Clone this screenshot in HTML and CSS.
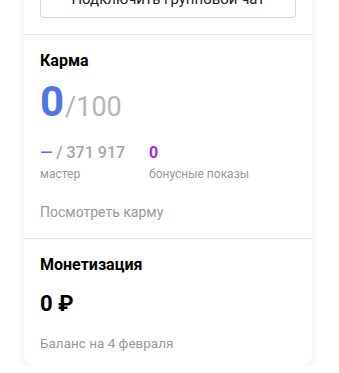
FILE: index.html
```html
<!DOCTYPE html>
<html lang="ru">
<head>
<meta charset="utf-8">
<link rel="stylesheet" href="styles.css">
</head>
<body>
<div class="card">
  <div class="section top">
    <button class="btn">Подключить групповой чат</button>
  </div>
  <div class="section karma">
    <h2 class="title">Карма</h2>
    <div class="score"><span class="score-val">0</span><span class="score-max">/100</span></div>
    <div class="stats">
      <div class="stat">
        <div class="stat-val"><span class="dash">—</span> / 371 917</div>
        <div class="stat-label">мастер</div>
      </div>
      <div class="stat">
        <div class="stat-val purple">0</div>
        <div class="stat-label">бонусные показы</div>
      </div>
    </div>
    <a class="link">Посмотреть карму</a>
  </div>
  <div class="section money">
    <h2 class="title">Монетизация</h2>
    <div class="amount">0 ₽</div>
    <div class="note">Баланс на 4 февраля</div>
  </div>
</div>
</body>
</html>
```

FILE: styles.css
```css
html, body {
  margin: 0;
  padding: 0;
  background: #fff;
  font-family: Roboto, "Noto Sans", sans-serif;
  overflow: hidden;
}
.card {
  margin: -20px 0 0 24px;
  width: 288px;
  background: #fff;
  border-radius: 0 0 12px 12px;
  box-shadow: 0 2px 10px rgba(0,0,0,0.08);
}
.section {
  padding: 0 16px;
  border-top: 1px solid #e6e6e6;
}
.section.top {
  border-top: none;
  padding-top: 0;
  padding-bottom: 16px;
}
.btn {
  display: block;
  width: 100%;
  height: 38px;
  border: 1px solid #d6d6d6;
  border-radius: 4px;
  background: #fff;
  font-family: inherit;
  font-size: 15px;
  color: #222;
  padding: 0;
  line-height: 36px;
}
.karma {
  padding-top: 16px;
  padding-bottom: 17px;
}
.title {
  margin: 0;
  font-size: 16px;
  font-weight: 700;
  color: #000;
  line-height: 20px;
}
.score {
  margin-top: 9px;
  line-height: 44px;
  height: 44px;
}
.score-val {
  font-size: 42px;
  font-weight: 700;
  color: #4d75e8;
}
.score-max {
  font-size: 27px;
  color: #b5b5b5;
  margin-left: 1px;
}
.stats {
  display: flex;
  margin-top: 19px;
}
.stat {
  width: 109px;
}
.stat-val {
  font-size: 16px;
  font-weight: 500;
  color: #a6a6a6;
  line-height: 20px;
}
.dash {
  color: #4d75e8;
}
.purple {
  color: #b41ff0;
  font-weight: 700;
}
.stat-label {
  font-size: 12px;
  color: #999;
  line-height: 16px;
  margin-top: 3px;
}
.link {
  display: block;
  margin-top: 21px;
  font-size: 14px;
  color: #999;
  line-height: 18px;
}
.money {
  padding-top: 16px;
  padding-bottom: 14px;
}
.amount {
  margin-top: 16px;
  font-size: 22px;
  font-weight: 700;
  color: #000;
  line-height: 26px;
}
.note {
  margin-top: 17px;
  font-size: 13.5px;
  color: #999;
  line-height: 18px;
}
```
